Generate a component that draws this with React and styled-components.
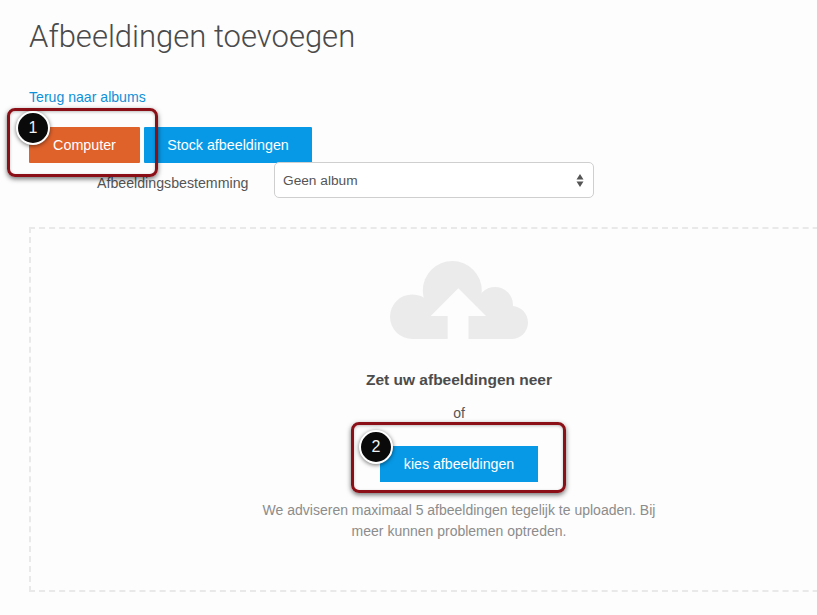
import React from 'react';
import styled, { createGlobalStyle } from 'styled-components';

const GlobalStyle = createGlobalStyle`
  html, body {
    margin: 0;
    padding: 0;
    height: 100%;
    background: #fdfdfd;
    overflow: hidden;
  }
`;

const Page = styled.div`
  position: relative;
  width: 817px;
  height: 615px;
  overflow: hidden;
  padding: 19px 0 0 29px;
  box-sizing: border-box;
  font-family: 'Liberation Sans', Arial, sans-serif;
  color: #4c4c4c;
`;

const Title = styled.h1`
  margin: 0;
  font-family: 'Roboto', 'Liberation Sans', sans-serif;
  font-size: 31px;
  line-height: 36px;
  font-weight: 300;
  color: #4a4a4a;
`;

const BackLink = styled.a`
  display: block;
  margin-top: 34px;
  font-size: 14.1px;
  line-height: 17px;
  color: #0f90d8;
  text-decoration: none;
`;

const Tabs = styled.div`
  display: flex;
  gap: 4px;
  margin-top: 21px;
`;

const Tab = styled.button`
  height: 36px;
  width: ${props => props.$width}px;
  padding: 0;
  border: none;
  border-radius: 1px;
  background: ${props => (props.$active ? '#e0622b' : '#0799e6')};
  color: #fff;
  font-family: inherit;
  font-size: 14.3px;
`;

const DestinationRow = styled.div`
  display: flex;
  align-items: center;
  height: 36px;
  margin-top: -1px;
  padding-left: 68px;
`;

const DestinationLabel = styled.label`
  width: 177px;
  font-size: 14.2px;
  color: #555;
  position: relative;
  top: 3px;
`;

const SelectBox = styled.div`
  display: flex;
  align-items: center;
  justify-content: space-between;
  box-sizing: border-box;
  width: 320px;
  height: 36px;
  padding: 0 9px 0 8px;
  background: #fff;
  border: 1px solid #cfcfcf;
  border-radius: 5px;
  font-size: 13.7px;
  color: #555;
`;

const DropZone = styled.div`
  display: flex;
  flex-direction: column;
  align-items: center;
  box-sizing: border-box;
  width: 860px;
  height: 365px;
  margin-top: 29px;
  padding-top: 32px;
  border: 2px dashed #e9e9e9;
`;

const Heading = styled.div`
  margin-top: 32px;
  font-size: 15.5px;
  line-height: 18px;
  font-weight: bold;
  color: #4c4c4c;
`;

const OrText = styled.div`
  margin-top: 16px;
  font-size: 14px;
  line-height: 16px;
  color: #555;
`;

const PickButton = styled.button`
  width: 158px;
  height: 36px;
  margin-top: 25px;
  padding: 0;
  border: none;
  background: #0799e6;
  color: #fff;
  font-family: inherit;
  font-size: 14.2px;
`;

const Advice = styled.p`
  width: 410px;
  margin: 18px 0 0;
  font-size: 14px;
  line-height: 21px;
  text-align: center;
  color: #8c8c8c;
`;

const Callout = styled.div`
  position: absolute;
  left: ${props => props.$left}px;
  top: ${props => props.$top}px;
  width: ${props => props.$width}px;
  height: ${props => props.$height}px;
  box-sizing: border-box;
  border: 3px solid #8b0f16;
  border-radius: 8px;
  box-shadow: 0 2px 5px rgba(0, 0, 0, 0.55), inset 0 1px 3px rgba(0, 0, 0, 0.25);
`;

const Badge = styled.div`
  position: absolute;
  left: ${props => props.$left}px;
  top: ${props => props.$top}px;
  display: flex;
  align-items: center;
  justify-content: center;
  box-sizing: border-box;
  width: 34px;
  height: 34px;
  border: 2px solid #fff;
  border-radius: 50%;
  background: #0a0a0a;
  box-shadow: 0 1px 4px rgba(0, 0, 0, 0.55);
  color: #f2f2f2;
  font-size: 16px;
`;

const CloudIcon = () => (
  <svg width="138" height="78" viewBox="0 0 138 78" aria-hidden="true">
    <g fill="#ebebeb">
      <circle cx="22.3" cy="55.7" r="22.3" />
      <circle cx="62.3" cy="29.5" r="29.5" />
      <circle cx="105" cy="44" r="18" />
      <circle cx="121.5" cy="61.5" r="16.5" />
      <rect x="22" y="50" width="100" height="28" />
    </g>
    <path d="M68.3 27.3 L96 55 H78.5 V78 H57.7 V55 H40.7 Z" fill="#fdfdfd" />
  </svg>
);

const SortArrows = () => (
  <svg width="8" height="13" viewBox="0 0 8 13" aria-hidden="true">
    <path d="M4 0 L7.5 5.5 H0.5 Z M0.5 7.5 H7.5 L4 13 Z" fill="#555" />
  </svg>
);

export default function App() {
  return (
    <Page>
      <GlobalStyle />
      <Title>Afbeeldingen toevoegen</Title>
      <BackLink href="#">Terug naar albums</BackLink>
      <Tabs>
        <Tab $active $width={111}>Computer</Tab>
        <Tab $width={168}>Stock afbeeldingen</Tab>
      </Tabs>
      <DestinationRow>
        <DestinationLabel>Afbeeldingsbestemming</DestinationLabel>
        <SelectBox>
          Geen album
          <SortArrows />
        </SelectBox>
      </DestinationRow>
      <DropZone>
        <CloudIcon />
        <Heading>Zet uw afbeeldingen neer</Heading>
        <OrText>of</OrText>
        <PickButton>kies afbeeldingen</PickButton>
        <Advice>
          We adviseren maximaal 5 afbeeldingen tegelijk te uploaden. Bij meer
          kunnen problemen optreden.
        </Advice>
      </DropZone>
      <Callout $left={7} $top={108} $width={151} $height={69} />
      <Badge $left={16} $top={111}>1</Badge>
      <Callout $left={351} $top={422} $width={215} $height={71} />
      <Badge $left={359} $top={430}>2</Badge>
    </Page>
  );
}
